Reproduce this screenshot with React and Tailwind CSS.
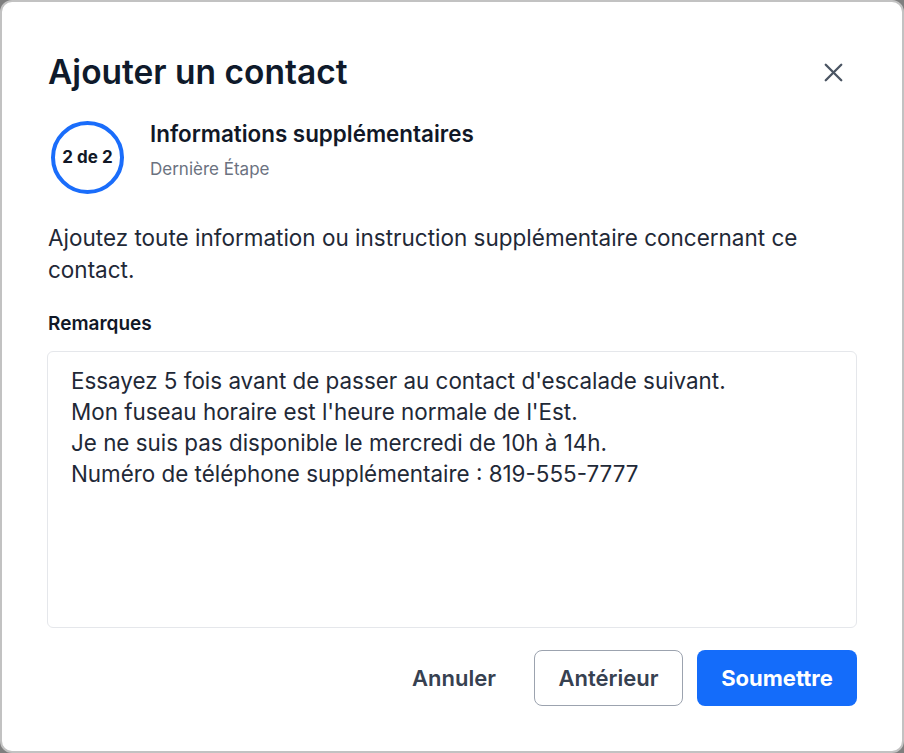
import { X } from "lucide-react";

const font = { fontFamily: "Inter, 'Noto Sans', sans-serif" };

export default function App() {
  return (
    <div className="w-[904px] h-[753px] bg-[#7f7f7f]" style={font}>
      <div className="w-full h-full bg-white border-2 border-[#c2c2c2] rounded-xl flex flex-col px-[45px]">
        <div className="flex items-center justify-between mt-[50px] h-[40px]">
          <h1 className="ml-[1px] text-[33.5px] leading-[40px] font-semibold text-[#0f1a2b]">Ajouter un contact</h1>
          <button className="w-10 h-10 flex items-center justify-center text-[#4b5563] mr-[4px]">
            <X size={31} strokeWidth={1.8} />
          </button>
        </div>

        <div className="flex items-start mt-[29px]">
          <div className="w-[73px] h-[73px] ml-[4px] rounded-full border-4 border-[#1a6dfb] flex items-center justify-center shrink-0">
            <span className="text-[17px] font-bold text-[#111827]">2 de 2</span>
          </div>
          <div className="ml-[26px] flex flex-col -mt-[1px]">
            <span className="text-[22.4px] leading-[28px] font-semibold text-[#111827]">Informations supplémentaires</span>
            <span className="text-[17px] leading-[22px] text-[#6b7280] mt-[10px]">Dernière Étape</span>
          </div>
        </div>

        <p className="ml-[1px] mt-[28px] text-[22.5px] leading-[32px] text-[#1f2937]">
          Ajoutez toute information ou instruction supplémentaire concernant ce contact.
        </p>

        <label className="ml-[1px] mt-[25px] text-[19px] leading-[26px] font-semibold text-[#111827]">Remarques</label>

        <textarea
          readOnly
          className="mt-[14px] h-[277px] w-full resize-none rounded-md border border-[#e5e7eb] px-[23px] pt-[13px] text-[22.4px] leading-[31px] text-[#1f2937] outline-none"
          style={font}
          value={
            "Essayez 5 fois avant de passer au contact d'escalade suivant.\nMon fuseau horaire est l'heure normale de l'Est.\nJe ne suis pas disponible le mercredi de 10h à 14h.\nNuméro de téléphone supplémentaire : 819-555-7777"
          }
        />

        <div className="flex justify-end items-center gap-[14px] mt-[22px]">
          <button className="h-[56px] px-[24px] text-[22px] font-semibold text-[#374151]">Annuler</button>
          <button className="h-[56px] w-[149px] rounded-lg border border-[#9ca3af] text-[22px] font-semibold text-[#374151]">
            Antérieur
          </button>
          <button className="h-[56px] w-[160px] rounded-lg bg-[#146cfa] text-[22px] font-bold text-white">
            Soumettre
          </button>
        </div>
      </div>
    </div>
  );
}
